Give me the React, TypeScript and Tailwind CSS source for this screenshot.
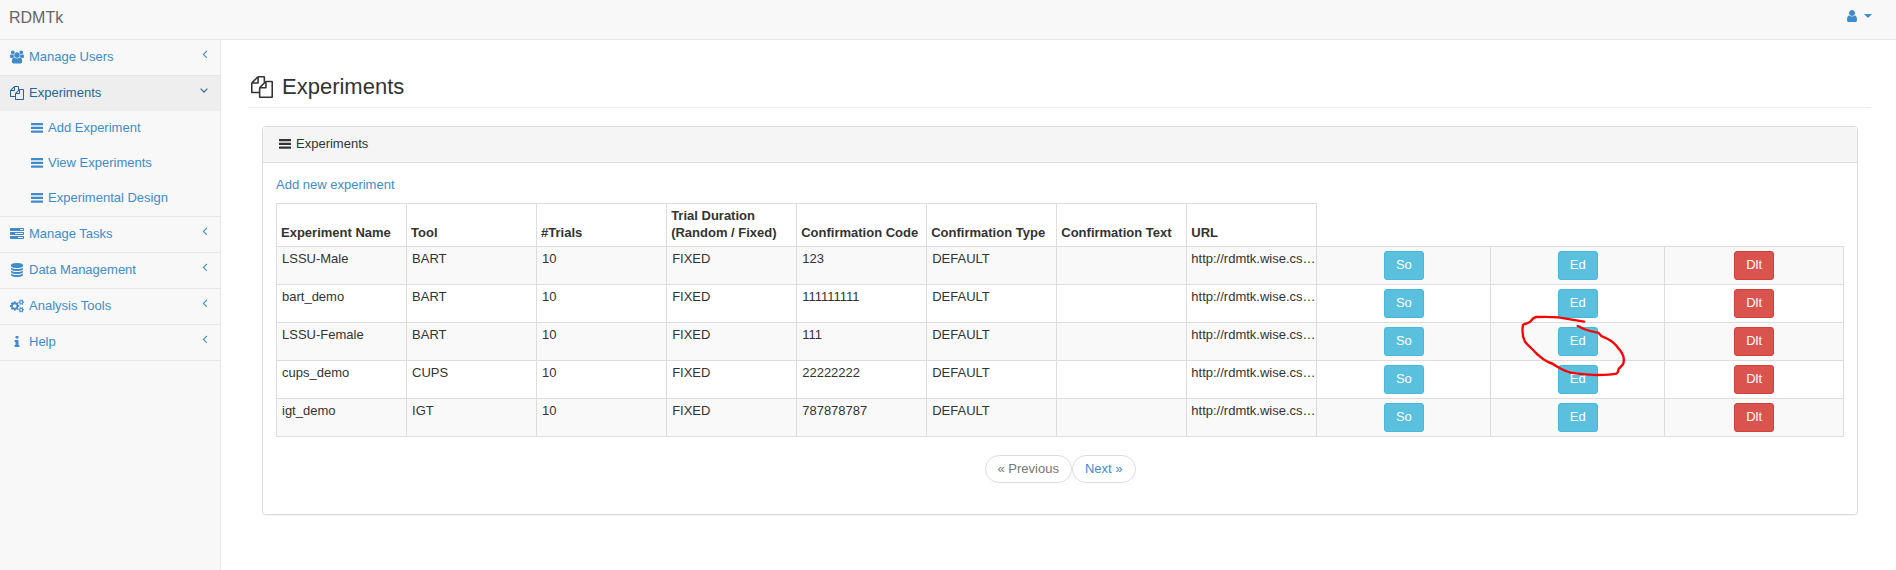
import React from 'react';

const paths = {
  files:
    'M1696 384q40 0 68 28t28 68v1216q0 40-28 68t-68 28h-960q-40 0-68-28t-28-68v-288h-544q-40 0-68-28t-28-68v-672q0-40 20-88t48-76l408-408q28-28 76-48t88-20h416q40 0 68 28t28 68v328q68-40 128-40h416zm-544 213l-299 299h299v-299zm-640-384l-299 299h299v-299zm196 647l316-316v-416h-384v416q0 40-28 68t-68 28h-416v640h512v-256q0-40 20-88t48-76zm956 804v-1152h-384v416q0 40-28 68t-68 28h-416v640h896z',
  users:
    'M657 896q-162 5-265 128h-134q-82 0-138-40.5t-56-118.5q0-353 124-353 6 0 43.5 21t97.5 42.5 119 21.5q67 0 133-23-5 37-5 66 0 139 81 256zm1071 637q0 120-73 189.5t-194 69.5h-874q-121 0-194-69.5t-73-189.5q0-53 3.5-103.5t14-109 26.5-108.5 43-97.5 62-81 85.5-53.5 111.5-20q10 0 43 21.5t73 48 107 48 135 21.5 135-21.5 107-48 73-48 43-21.5q61 0 111.5 20t85.5 53.5 62 81 43 97.5 26.5 108.5 14 109 3.5 103.5zm-1024-1277q0 106-75 181t-181 75-181-75-75-181 75-181 181-75 181 75 75 181zm704 384q0 159-112.5 271.5t-271.5 112.5-271.5-112.5-112.5-271.5 112.5-271.5 271.5-112.5 271.5 112.5 112.5 271.5zm576 225q0 78-56 118.5t-138 40.5h-134q-103-123-265-128 81-117 81-256 0-29-5-66 66 23 133 23 59 0 119-21.5t97.5-42.5 43.5-21q124 0 124 353zm-128-609q0 106-75 181t-181 75-181-75-75-181 75-181 181-75 181 75 75 181z',
  tasks:
    'M1024 1408h640v-128h-640v128zm-384-512h1024v-128h-1024v128zm640-512h384v-128h-384v128zm512 832v256q0 26-19 45t-45 19h-1664q-26 0-45-19t-19-45v-256q0-26 19-45t45-19h1664q26 0 45 19t19 45zm0-512v256q0 26-19 45t-45 19h-1664q-26 0-45-19t-19-45v-256q0-26 19-45t45-19h1664q26 0 45 19t19 45zm0-512v256q0 26-19 45t-45 19h-1664q-26 0-45-19t-19-45v-256q0-26 19-45t45-19h1664q26 0 45 19t19 45z',
  database:
    'M896 768q237 0 443-43t325-127v170q0 69-103 128t-280 93.5-385 34.5-385-34.5-280-93.5-103-128v-170q119 84 325 127t443 43zm0 768q237 0 443-43t325-127v170q0 69-103 128t-280 93.5-385 34.5-385-34.5-280-93.5-103-128v-170q119 84 325 127t443 43zm0-384q237 0 443-43t325-127v170q0 69-103 128t-280 93.5-385 34.5-385-34.5-280-93.5-103-128v-170q119 84 325 127t443 43zm0-1152q208 0 385 34.5t280 93.5 103 128v128q0 69-103 128t-280 93.5-385 34.5-385-34.5-280-93.5-103-128v-128q0-69 103-128t280-93.5 385-34.5z',
  cogs:
    'M832 896q0-106-75-181t-181-75-181 75-75 181 75 181 181 75 181-75 75-181zm768 512q0-52-38-90t-90-38-90 38-38 90q0 53 37.5 90.5t90.5 37.5 90.5-37.5 37.5-90.5zm0-1024q0-52-38-90t-90-38-90 38-38 90q0 53 37.5 90.5t90.5 37.5 90.5-37.5 37.5-90.5zm-384 421v185q0 10-7 19.5t-16 10.5l-155 24q-11 35-32 76 34 48 90 115 7 11 7 20 0 12-7 19-23 30-82.5 89.5t-78.5 59.5q-11 0-21-7l-115-90q-37 19-77 31-11 108-23 155-7 24-30 24h-186q-11 0-20-7.5t-10-17.5l-23-153q-34-10-75-31l-118 89q-7 7-20 7-11 0-21-8-144-133-144-160 0-9 7-19 10-14 41-53t47-61q-23-44-35-82l-152-24q-10-1-17-9.5t-7-19.5v-185q0-10 7-19.5t16-10.5l155-24q11-35 32-76-34-48-90-115-7-11-7-20 0-12 7-20 22-30 82-89t79-59q11 0 21 7l115 90q34-18 77-32 11-108 23-154 7-24 30-24h186q11 0 20 7.5t10 17.5l23 153q34 10 75 31l118-89q8-7 20-7 11 0 21 8 144 133 144 160 0 9-7 19-12 16-42 54t-45 60q23 48 34 82l152 23q10 2 17 10.5t7 19.5zm640 533v140q0 16-149 31-12 27-30 52 51 113 51 138 0 4-4 7-122 71-124 71-8 0-46-47t-52-68q-20 2-30 2t-30-2q-14 21-52 68t-46 47q-2 0-124-71-4-3-4-7 0-25 51-138-18-25-30-52-149-15-149-31v-140q0-16 149-31 13-29 30-52-51-113-51-138 0-4 4-7 4-2 35-20t59-34 30-16q8 0 46 46.5t52 67.5q20-2 30-2t30 2q51-71 92-112l6-2q4 0 124 70 4 3 4 7 0 25-51 138 17 23 30 52 149 15 149 31zm0-1024v140q0 16-149 31-12 27-30 52 51 113 51 138 0 4-4 7-122 71-124 71-8 0-46-47t-52-68q-20 2-30 2t-30-2q-14 21-52 68t-46 47q-2 0-124-71-4-3-4-7 0-25 51-138-18-25-30-52-149-15-149-31v-140q0-16 149-31 13-29 30-52-51-113-51-138 0-4 4-7 4-2 35-20t59-34 30-16q8 0 46 46.5t52 67.5q20-2 30-2t30 2q51-71 92-112l6-2q4 0 124 70 4 3 4 7 0 25-51 138 17 23 30 52 149 15 149 31z',
  info: 'M1216 1344v128q0 26-19 45t-45 19h-512q-26 0-45-19t-19-45v-128q0-26 19-45t45-19h64v-384h-64q-26 0-45-19t-19-45v-128q0-26 19-45t45-19h384q26 0 45 19t19 45v576h64q26 0 45 19t19 45zm-128-1152v192q0 26-19 45t-45 19h-256q-26 0-45-19t-19-45v-192q0-26 19-45t45-19h256q26 0 45 19t19 45z',
  user: 'M1536 1399q0 109-62.5 187t-150.5 78h-854q-88 0-150.5-78t-62.5-187q0-85 8.5-160.5t31.5-152 58.5-131 94-89 134.5-34.5q131 128 313 128t313-128q76 0 134.5 34.5t94 89 58.5 131 31.5 152 8.5 160.5zm-256-887q0 159-112.5 271.5t-271.5 112.5-271.5-112.5-112.5-271.5 112.5-271.5 271.5-112.5 271.5 112.5 112.5 271.5z',
};

const boxes: Partial<Record<IconName, string>> = {
  users: '64 0 1920 1792',
  cogs: '-64 0 1920 1792',
};

type IconName = keyof typeof paths;

function Icon({ name, className = 'mt-px size-[14px]' }: { name: IconName; className?: string }) {
  return (
    <svg aria-hidden="true" viewBox={boxes[name] ?? '0 0 1792 1792'} className={`shrink-0 ${className}`} fill="currentColor">
      <path d={paths[name]} />
    </svg>
  );
}

function Bars() {
  return (
    <svg aria-hidden="true" viewBox="0 0 12 10" className="mt-px h-[10px] w-3 shrink-0" fill="currentColor">
      <rect width="12" height="2.2" rx="0.3" />
      <rect y="3.8" width="12" height="2.2" rx="0.3" />
      <rect y="7.6" width="12" height="2.2" rx="0.3" />
    </svg>
  );
}

function Chevron({ open = false }: { open?: boolean }) {
  return (
    <svg aria-hidden="true" viewBox="0 0 8 8" className="mb-[5px] size-2 shrink-0" fill="none" stroke="currentColor" strokeWidth="1.1">
      <path d={open ? 'M0.6 2.7 4 6.1 7.4 2.7' : 'M6.8 1 3.4 4.4 6.8 7.8'} />
    </svg>
  );
}

const menu: { label: string; icon: IconName; children?: string[] }[] = [
  { label: 'Manage Users', icon: 'users' },
  { label: 'Experiments', icon: 'files', children: ['Add Experiment', 'View Experiments', 'Experimental Design'] },
  { label: 'Manage Tasks', icon: 'tasks' },
  { label: 'Data Management', icon: 'database' },
  { label: 'Analysis Tools', icon: 'cogs' },
  { label: 'Help', icon: 'info' },
];

const headers = [
  'Experiment Name',
  'Tool',
  '#Trials',
  'Trial Duration (Random / Fixed)',
  'Confirmation Code',
  'Confirmation Type',
  'Confirmation Text',
  'URL',
];

const url = 'http://rdmtk.wise.cs…';

const rows = [
  ['LSSU-Male', 'BART', '10', 'FIXED', '123', 'DEFAULT', ''],
  ['bart_demo', 'BART', '10', 'FIXED', '111111111', 'DEFAULT', ''],
  ['LSSU-Female', 'BART', '10', 'FIXED', '111', 'DEFAULT', ''],
  ['cups_demo', 'CUPS', '10', 'FIXED', '22222222', 'DEFAULT', ''],
  ['igt_demo', 'IGT', '10', 'FIXED', '787878787', 'DEFAULT', ''],
];

const markedRow = 2;

function Sidebar() {
  return (
    <nav className="w-[221px] shrink-0 border-r border-[#e7e7e7] bg-[#f8f8f8] text-[#428bca]">
      <ul>
        {menu.map((item) => (
          <li key={item.label} className="border-b border-[#e7e7e7]">
            <a
              href="#"
              className={`flex items-center gap-[5px] pt-2 pr-3 pb-[10px] pl-[10px] ${item.children ? 'bg-[#eee] text-[#2a6496]' : ''}`}
            >
              <Icon name={item.icon} />
              <span className="grow">{item.label}</span>
              <Chevron open={Boolean(item.children)} />
            </a>
            {item.children && (
              <ul>
                {item.children.map((child) => (
                  <li key={child}>
                    <a href="#" className="flex items-center gap-[5px] pt-2 pb-[10px] pl-[31px]">
                      <Bars />
                      {child}
                    </a>
                  </li>
                ))}
              </ul>
            )}
          </li>
        ))}
      </ul>
    </nav>
  );
}

function PenCircle() {
  return (
    <svg
      aria-hidden="true"
      viewBox="120 400 330 198"
      className="pointer-events-none absolute -top-[14px] -left-[38px] z-10 h-[66px] w-[110px] max-w-none"
      fill="none"
      stroke="#fb0202"
      strokeWidth="7"
      strokeLinecap="round"
      strokeLinejoin="round"
    >
      <path d="M312 426C285 421 262 417 235 413C210 411 190 411 168 412C158 414 155 420 151 426C143 431 136 431 129 436C126 452 128 472 135 486C146 499 159 510 172 524C182 533 192 541 204 547C212 549 220 553 228 559C240 566 255 575 272 579C295 584 322 584 350 586C374 586 395 586 409 582C416 578 414 573 416 568C420 562 428 558 430 551C433 541 431 529 425 519C420 509 413 506 410 499C399 485 384 477 366 470C361 467 359 461 353 459C340 457 325 453 312 448C304 445 300 441 293 439" />
    </svg>
  );
}

const buttonBase = 'h-[29px] rounded-[3px] border px-[11px] pb-[2px] align-top leading-[17px] text-white';

export default function App() {
  return (
    <div className="flex min-h-screen flex-col bg-white font-['Liberation_Sans',Arial,sans-serif] text-[13px] leading-[17px] text-[#333]">
      <header className="flex h-10 items-center justify-between border-b border-[#e7e7e7] bg-[#f8f8f8] pr-6 pl-[9px]">
        <a href="#" className="pb-1 text-base leading-5 text-[#666]">
          RDMTk
        </a>
        <button type="button" aria-label="Account" className="flex items-center gap-[5px] pb-[9px] text-[#428bca]">
          <Icon name="user" />
          <svg aria-hidden="true" viewBox="0 0 8 4" className="mt-[2px] h-1 w-2" fill="currentColor">
            <path d="M0 0h8L4 4z" />
          </svg>
        </button>
      </header>

      <div className="flex grow">
        <Sidebar />

        <main className="min-w-0 grow pt-[34px] pr-[25px] pl-[27px]">
          <h1 className="flex items-center gap-[9px] border-b border-[#eee] pb-2 pl-[3px] text-[22px] leading-[25px]">
            <Icon name="files" className="size-[22px]" />
            Experiments
          </h1>

          <section className="mt-[18px] mr-[13px] ml-[14px] rounded-[4px] border border-[#ddd] shadow-[0_1px_1px_rgba(0,0,0,0.05)]">
            <h2 className="flex items-center gap-[5px] rounded-t-[3px] border-b border-[#ddd] bg-[#f5f5f5] px-4 pt-2 pb-[10px]">
              <Bars />
              Experiments
            </h2>
            <div className="px-[13px] pt-[13px] pb-[31px]">
              <a href="#" className="mb-[10px] inline-block align-top text-[#428bca]">
                Add new experiment
              </a>
              <table className="w-full table-fixed border-collapse">
                <colgroup>
                  {headers.map((header) => (
                    <col key={header} className="w-[8.3%]" />
                  ))}
                  <col className="w-[11.1%]" />
                  <col className="w-[11.1%]" />
                  <col />
                </colgroup>
                <thead>
                  <tr>
                    {headers.map((header) => (
                      <th key={header} scope="col" className="border border-[#ddd] px-1 pt-[3px] pb-[5px] text-left align-bottom font-bold">
                        {header}
                      </th>
                    ))}
                  </tr>
                </thead>
                <tbody>
                  {rows.map((row, index) => (
                    <tr key={row[0]} className="odd:bg-[#f9f9f9]">
                      {row.map((value, column) => (
                        <td key={headers[column]} className="border border-[#ddd] px-[5px] pt-[3px] align-top">
                          {value}
                        </td>
                      ))}
                      <td className="border border-[#ddd] pt-[3px] pl-1 align-top whitespace-nowrap">{url}</td>
                      <td className="border border-[#ddd] p-1 text-center align-top">
                        <button type="button" className={`${buttonBase} border-[#46b8da] bg-[#5bc0de]`}>
                          So
                        </button>
                      </td>
                      <td className="border border-[#ddd] p-1 text-center align-top">
                        <span className="relative inline-block align-top">
                          <button type="button" className={`${buttonBase} border-[#46b8da] bg-[#5bc0de]`}>
                            Ed
                          </button>
                          {index === markedRow && <PenCircle />}
                        </span>
                      </td>
                      <td className="border border-[#ddd] p-1 text-center align-top">
                        <button type="button" className={`${buttonBase} border-[#d43f3a] bg-[#d9534f]`}>
                          Dlt
                        </button>
                      </td>
                    </tr>
                  ))}
                </tbody>
              </table>
              <nav aria-label="Pages" className="mt-[18px] flex justify-center">
                <button type="button" disabled className="h-7 rounded-[14px] border border-[#ddd] bg-white px-3 pb-px text-[#777]">
                  « Previous
                </button>
                <button type="button" className="h-7 rounded-[14px] border border-[#ddd] bg-white px-3 pb-px text-[#428bca]">
                  Next »
                </button>
              </nav>
            </div>
          </section>
        </main>
      </div>
    </div>
  );
}
